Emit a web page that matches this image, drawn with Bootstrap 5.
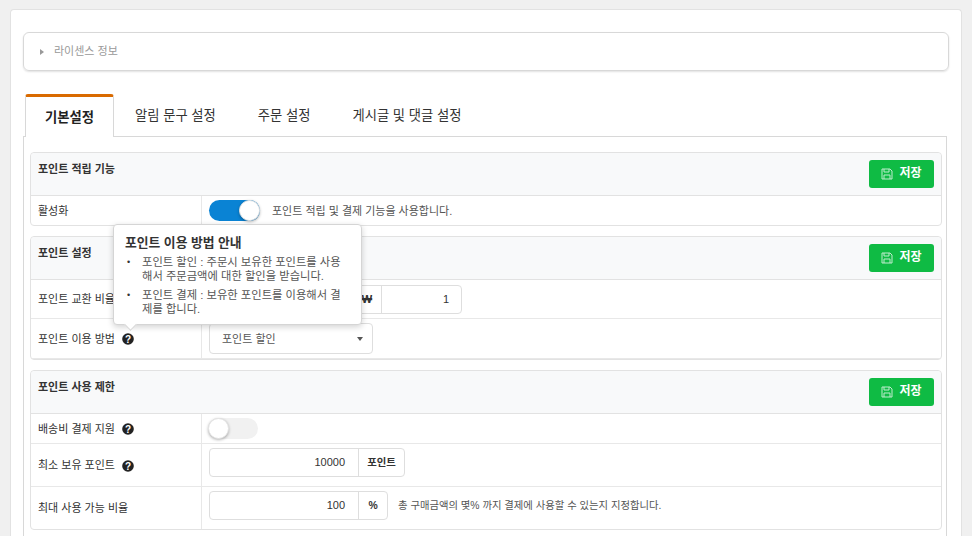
<!DOCTYPE html>
<html lang="ko">
<head>
<meta charset="utf-8">
<title>포인트 설정</title>
<link href="https://cdn.jsdelivr.net/npm/bootstrap@5.3.0/dist/css/bootstrap.min.css" rel="stylesheet">
<style>
html,body{height:536px;overflow:hidden}
body{background:#f0f0f0;font-family:"Liberation Sans","Noto Sans CJK KR",sans-serif;font-size:11px;color:#333;padding:9px 10px 0 10px;line-height:1.3}
.sheet{background:#fff;border:1px solid #e2e2e2;border-bottom:0;border-radius:4px 4px 0 0;width:952px;height:527px;padding:22px 12px 0 12px;overflow:hidden}
.license{border:1px solid #d8d8d8;border-radius:6px;height:39px;padding:0 16px;box-shadow:0 1px 2px rgba(0,0,0,.12);color:#999;font-size:11px;gap:10px;width:926px}
.tri{width:0;height:0;border-left:4px solid #999;border-top:3.5px solid transparent;border-bottom:3.5px solid transparent}
.tabbar{margin-top:23px;height:43px;border-bottom:1px solid #d8d8d8;padding-left:2px;width:924px}
.tabitem{font-size:13.3px;color:#333;padding:0 21px;height:43px;line-height:44px;white-space:nowrap}
.tabitem.on{font-weight:700;color:#222;background:#fff;border:1px solid #d8d8d8;border-top:3px solid #d96a00;border-bottom:0;border-radius:3px 3px 0 0;width:89px;padding:0;text-align:center;height:43px;line-height:42px}
.tabitem.two{padding:0 21px}
.tabpane{border:1px solid #d8d8d8;border-top:0;border-bottom:0;width:924px;padding:15px 5px 0 6px;height:399px}
.panelbox{border:1px solid #e2e2e2;border-radius:4px;margin-bottom:10px;width:912px;position:relative}
.panelhead{background:#f8f9fa;height:43px;border-bottom:1px solid #e2e2e2;padding:7px 7px 0 7px;border-radius:4px 4px 0 0}
.paneltitle{font-weight:700;color:#333;font-size:11px;padding-top:2px}
.savebtn{background:#0fbb44;color:#fff;font-weight:700;font-size:12px;border-radius:3px;width:65px;height:28px;gap:6px;border:0;padding:0}
.rowline{border-bottom:1px solid #e8e8e8}
.rowline:last-child{border-bottom:0}
.rowlabel{width:171px;flex:none;padding:1px 0 0 7px;border-right:1px solid #e8e8e8;color:#333;gap:7px;align-self:stretch}
.rowvalue{padding-left:7px;gap:10px;color:#555}
.rowvalue.lifted{padding-bottom:5px}
.notetext{font-size:10.35px}
.sidetext{padding-top:1px}
.switchbox{width:50px;height:21px;border-radius:11px;background:#f1f1f1;position:relative;flex:none}
.switchbox.act{background:#0a83d4;width:51px}
.switchbox.idle{margin-left:-1px}
.knob{position:absolute;top:0;left:0;width:21px;height:21px;border-radius:50%;background:#fff;border:1px solid #e4e4e4;box-shadow:0 1px 3px rgba(0,0,0,.3)}
.switchbox.act .knob{left:30px}
.numgroup{border:1px solid #dedede;border-radius:4px;height:29px;background:#fff}
.numfield{text-align:right;padding-right:13px;color:#333;line-height:27px;height:27px}
.unitcell{border-left:1px solid #dedede;font-weight:700;text-align:center;color:#333;line-height:27px;height:27px;font-size:10.4px}
.wonsign{width:24px;font-size:11px;padding-right:5px}
.picker{border:1px solid #dedede;border-radius:4px;width:164px;height:31px;padding:1px 9px 0 12px;color:#555;background:#fff}
.caretdown{width:0;height:0;border-top:4px solid #555;border-left:3.5px solid transparent;border-right:3.5px solid transparent}
.qmark{width:12px;height:12px;flex:none}
.hintbox{position:absolute;left:82px;top:-13px;width:249px;height:101px;background:#fff;border:1px solid #d5d5d5;border-radius:4px;box-shadow:0 2px 6px rgba(0,0,0,.18);padding:10px 12px 0 11px;z-index:5}
.hintbox::after{content:"";position:absolute;left:12px;bottom:-5px;width:9px;height:9px;background:#fff;border-right:1px solid #d5d5d5;border-bottom:1px solid #d5d5d5;transform:rotate(45deg)}
.hinttitle{font-weight:700;font-size:12.8px;color:#333;line-height:16px;margin-bottom:4px}
.hintlist{margin:0;padding:0 0 0 17px;color:#555;line-height:14px;list-style:none;font-size:11.3px}
.hintlist li{margin-bottom:5px;position:relative}
.hintlist li::before{content:"•";position:absolute;left:-15px;top:0;color:#333;font-size:9px}
</style>
</head>
<body>
<div class="sheet">
  <div class="license d-flex align-items-center"><span class="tri"></span><span>라이센스 정보</span></div>
  <div class="tabbar d-flex">
    <div class="tabitem on">기본설정</div>
    <div class="tabitem two">알림 문구 설정</div>
    <div class="tabitem">주문 설정</div>
    <div class="tabitem">게시글 및 댓글 설정</div>
  </div>
  <div class="tabpane">
    <div class="panelbox">
      <div class="panelhead d-flex justify-content-between"><span class="paneltitle">포인트 적립 기능</span>
        <button class="savebtn d-flex align-items-center justify-content-center"><svg width="12" height="12" viewBox="0 0 12 12" fill="none" stroke="#bfeccd" stroke-width="1"><path d="M1 1h8l2 2v8H1z"/><path d="M3 1v3h5V1M3 11V7h6v4"/></svg><span>저장</span></button></div>
      <div class="rowline d-flex align-items-center" style="height:29px"><div class="rowlabel d-flex align-items-center">활성화</div><div class="rowvalue d-flex align-items-center" style="gap:12px"><span class="switchbox act"><span class="knob"></span></span><span class="sidetext">포인트 적립 및 결제 기능을 사용합니다.</span></div></div>
    </div>
    <div class="panelbox">
      <div class="panelhead d-flex justify-content-between"><span class="paneltitle">포인트 설정</span>
        <button class="savebtn d-flex align-items-center justify-content-center"><svg width="12" height="12" viewBox="0 0 12 12" fill="none" stroke="#bfeccd" stroke-width="1"><path d="M1 1h8l2 2v8H1z"/><path d="M3 1v3h5V1M3 11V7h6v4"/></svg><span>저장</span></button></div>
      <div class="rowline d-flex align-items-center" style="height:39px"><div class="rowlabel d-flex align-items-center">포인트 교환 비율</div><div class="rowvalue d-flex align-items-center"><div class="numgroup d-flex" style="width:253px"><div class="numfield" style="width:147px"></div><div class="unitcell wonsign">₩</div><div class="unitcell flex-grow-1"><span class="numfield d-block" style="font-weight:400;padding-right:12px;font-size:11px">1</span></div></div></div></div>
      <div class="rowline d-flex align-items-center" style="height:40px"><div class="rowlabel d-flex align-items-center"><span>포인트 이용 방법</span><svg class="qmark" viewBox="0 0 12 12"><circle cx="6" cy="6" r="5.8" fill="#222"/><text x="6" y="9.6" text-anchor="middle" font-size="10" font-weight="700" font-family="Liberation Sans" fill="#fff">?</text></svg></div><div class="rowvalue d-flex align-items-center"><div class="picker d-flex align-items-center justify-content-between"><span>포인트 할인</span><span class="caretdown"></span></div></div></div>
      <div class="hintbox">
        <div class="hinttitle">포인트 이용 방법 안내</div>
        <ul class="hintlist">
          <li>포인트 할인 : 주문시 보유한 포인트를 사용<br>해서 주문금액에 대한 할인을 받습니다.</li>
          <li>포인트 결제 : 보유한 포인트를 이용해서 결<br>제를 합니다.</li>
        </ul>
      </div>
    </div>
    <div class="panelbox">
      <div class="panelhead d-flex justify-content-between"><span class="paneltitle">포인트 사용 제한</span>
        <button class="savebtn d-flex align-items-center justify-content-center"><svg width="12" height="12" viewBox="0 0 12 12" fill="none" stroke="#bfeccd" stroke-width="1"><path d="M1 1h8l2 2v8H1z"/><path d="M3 1v3h5V1M3 11V7h6v4"/></svg><span>저장</span></button></div>
      <div class="rowline d-flex align-items-center" style="height:30px"><div class="rowlabel d-flex align-items-center"><span>배송비 결제 지원</span><svg class="qmark" viewBox="0 0 12 12"><circle cx="6" cy="6" r="5.8" fill="#222"/><text x="6" y="9.6" text-anchor="middle" font-size="10" font-weight="700" font-family="Liberation Sans" fill="#fff">?</text></svg></div><div class="rowvalue d-flex align-items-center"><span class="switchbox idle"><span class="knob"></span></span></div></div>
      <div class="rowline d-flex align-items-center" style="height:43px"><div class="rowlabel d-flex align-items-center"><span>최소 보유 포인트</span><svg class="qmark" viewBox="0 0 12 12"><circle cx="6" cy="6" r="5.8" fill="#222"/><text x="6" y="9.6" text-anchor="middle" font-size="10" font-weight="700" font-family="Liberation Sans" fill="#fff">?</text></svg></div><div class="rowvalue lifted d-flex align-items-center"><div class="numgroup d-flex" style="width:196px"><div class="numfield" style="width:148px">10000</div><div class="unitcell flex-grow-1">포인트</div></div></div></div>
      <div class="rowline d-flex align-items-center" style="height:42px"><div class="rowlabel d-flex align-items-center">최대 사용 가능 비율</div><div class="rowvalue lifted d-flex align-items-center"><div class="numgroup d-flex" style="width:179px"><div class="numfield" style="width:148px">100</div><div class="unitcell flex-grow-1">%</div></div><span class="notetext">총 구매금액의 몇% 까지 결제에 사용할 수 있는지 지정합니다.</span></div></div>
    </div>
  </div>
</div>
<script src="https://cdn.jsdelivr.net/npm/bootstrap@5.3.0/dist/js/bootstrap.bundle.min.js"></script>
</body>
</html>
